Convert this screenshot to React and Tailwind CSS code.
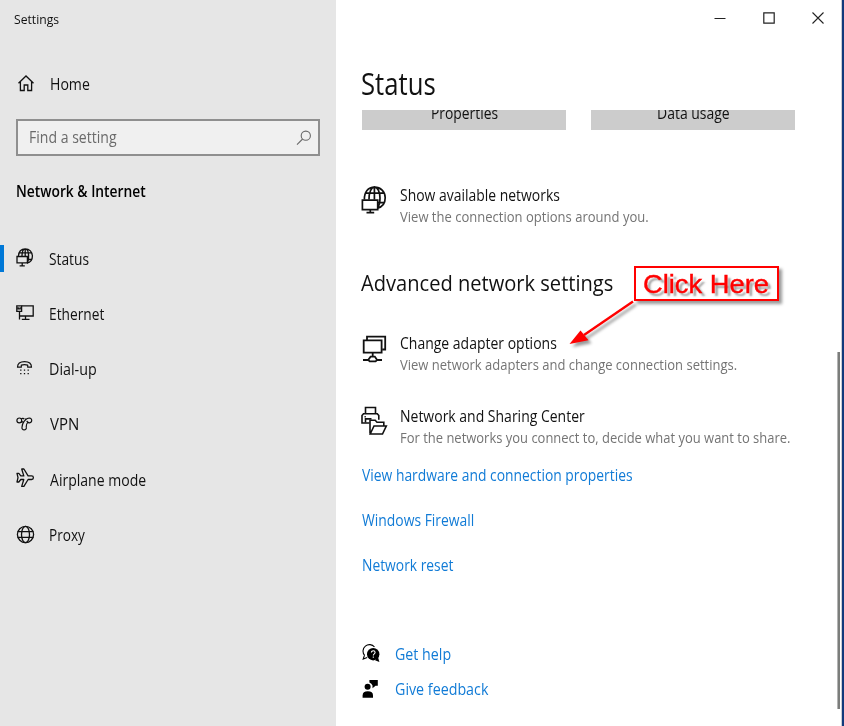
import { useLayoutEffect, useRef, useState } from "react";

// Condenses a line of text horizontally so that it fills the width of its box.
function Line({ children, className = "" }) {
  const box = useRef(null);
  const text = useRef(null);
  const [scale, setScale] = useState(1);
  useLayoutEffect(() => {
    setScale(box.current.clientWidth / text.current.offsetWidth);
  }, [children]);
  return (
    <div ref={box} className={`flex h-5 shrink-0 items-center ${className}`}>
      <span
        ref={text}
        className="inline-block shrink-0 origin-left whitespace-nowrap"
        style={{ transform: `scaleX(${scale})` }}
      >
        {children}
      </span>
    </div>
  );
}

function Svg({ w, h, sw = 1.3, className = "", children }) {
  return (
    <svg
      width={w}
      height={h}
      viewBox={`0 0 ${w} ${h}`}
      fill="none"
      stroke="currentColor"
      strokeWidth={sw}
      className={`shrink-0 ${className}`}
    >
      {children}
    </svg>
  );
}

const HomeIcon = () => (
  <Svg w={18} h={18} className="ml-[17px]">
    <path d="M1.5 8.3 9 1l7.500 7.300M3.400 6.900V15.500h3.800V10h3.600v5.500h3.800V6.900" />
  </Svg>
);

const StatusIcon = () => (
  <Svg w={18} h={20} className="ml-4 -mt-[3px]">
    <path d="M2.500 9.200C2.500 4.600 5.200 1.800 9.200 1.800c4.200 0 7.200 3 7.200 7.300 0 3.700-2.200 6.500-5.400 7.100M6 9.200c0-4.400 1.300-7.400 3.200-7.400 2 0 3.400 3.100 3.400 7.400 0 3.300-.6 5.600-1.600 6.600M3.500 5.900h12M11.500 12.500h4M9.200 1.800v7.400" />
    <path d="M1 9.500h10.400v6.300H1zM6.200 16v2.500M3.600 18.800h5.200" />
  </Svg>
);

const EthernetIcon = () => (
  <Svg w={19} h={17} className="ml-4 -mt-[2px]">
    <path d="M5.500 1.800h11.700V12H3.500V7M9.500 12v3M5.800 15.300h7.700M3.500 7.500v8" />
    <path d="M.8 1.800h4.800v5.500H.8zM2.200 3.200v1.600h2V3.200" />
  </Svg>
);

const DialIcon = () => (
  <Svg w={17} h={17} className="ml-4 -mt-[2px]" sw={1.2}>
    <path
      d="M1.500 7.200c0-3.500 2.500-5.600 7-5.600s7 2.100 7 5.600h-3.800V5.100c-1.800-.6-4.600-.6-6.400 0v2.100Z"
      strokeLinejoin="round"
    />
    <path
      d="M4.800 9.500v1.300M8.500 9.500v1.300M12.200 9.500v1.300M4.800 13v1.300M8.500 13v1.300M12.200 13v1.300"
      strokeWidth="1.3"
    />
  </Svg>
);

const VpnIcon = () => (
  <Svg w={18} h={15} className="ml-4 -mt-px" sw={1.2}>
    <circle cx="3.300" cy="4.400" r="2.400" />
    <path d="M5.300 2.900c.9-.9 2.300-.6 2.900.3M5.300 5.900c.7.500 1.400.1 1.900-.6M9 2.600l.9 1" />
    <path d="M10.300 11.300a2.200 2.200 0 1 1-4.300 0C6 7.500 9.500 2 13.500 2a2.400 2.400 0 1 1-.4 4.800c-1.200-.2-1.700-1.100-2.400-1.900M10.300 11.300c0-1.700-.6-2.200 1.300-4.800" />
  </Svg>
);

const PlaneIcon = () => (
  <Svg w={19} h={20} className="ml-4 -mt-[3px]">
    <path
      d="M1 5.400h1.800l2 2.500h3L5.700 1h2.200l4.200 6.900h3.500c1 0 1.800.8 1.800 1.800s-.8 1.800-1.800 1.800h-3.500L7.900 18.400H5.700l2.100-6.900h-3l-2 2.500H1l1-4.300Z"
      strokeLinejoin="round"
    />
  </Svg>
);

const GlobeIcon = () => (
  <Svg w={19} h={19} className="ml-[15.5px] -mt-px">
    <circle cx="9.500" cy="9.500" r="8.100" />
    <ellipse cx="9.500" cy="9.500" rx="4" ry="8.100" />
    <path d="M1.600 6.600h15.800M1.600 12.400h15.800" />
  </Svg>
);

const NetworksIcon = () => (
  <Svg w={26} h={30} sw={1.7}>
    <path d="M3.400 14.500C3.200 7 7 2.200 13.600 2.200c6 0 10.600 4.400 10.600 10.500 0 5.200-3 9.300-7.800 10.400M8 14.500c-.1-7 2.200-12.300 5.400-12.300 3.400 0 5.600 4.700 5.600 11 0 4-.8 7-2.200 9M4.600 8.200h18M17 17.600h6.500M13.400 2.200v12.300" />
    <path d="M1.400 15.100h15.300v9.500H1.400zM9.300 24.600v3M5.500 27.600h7.700" />
  </Svg>
);

const AdapterIcon = () => (
  <Svg w={26} h={30} sw={1.8}>
    <path d="M6 7V3.600h18.200v12.900h-3" />
    <path d="M2.700 7.400h17.900v12.200H2.700zM11.700 19.600v3.600M2 27h5.400M15.800 27h5.200" />
    <path d="M9.600 23.600h4.200l2.300 3.300-1.500 1.500H8.700L7.200 26.900Z" />
  </Svg>
);

const SharingIcon = () => (
  <Svg w={27} h={30} sw={1.6}>
    <path d="M4.500 7.800V1.500h10v6.300M8.500 17H1V9.500l1.500-1.700h13.800l1.500 1.700v4.300" />
    <path d="M4.500 16.500v-3.600h6M3.500 10.700h1.300" />
    <path d="M9 27.500V14.300h5.200l1.800 2h6.800v3M9.200 28l3.800-8h12.300L21.500 28Z" />
  </Svg>
);

const HelpIcon = () => (
  <Svg w={19} h={20} className="ml-px" sw={1.1}>
    <path d="M2.500 11.200A5.700 5.700 0 1 1 12.500 3M2.500 11.200l-1.300 3.900 4-1.600" />
    <circle cx="11.200" cy="10.200" r="6.200" fill="currentColor" stroke="none" />
    <path d="m13 16.200 4.400 1.800-1.400-5Z" fill="currentColor" stroke="none" />
    <path d="M9.400 8.600c0-2.500 3.700-2.300 3.700 0 0 1.300-1.800 1.300-1.800 2.900M11.300 12.500v1.300" stroke="#fff" />
  </Svg>
);

const FeedbackIcon = () => (
  <Svg w={19} h={20} className="ml-px">
    <g fill="currentColor" stroke="none">
      <circle cx="5.600" cy="7.800" r="3" />
      <path d="M.6 18.800v-2.400c0-2.800 1.800-4.200 5.200-4.200s5.200 1.400 5.200 4.200v2.400Z" />
      <path d="M7.400 1h8.400v5.800h-2.300L10.500 9.300V6.500Q9.700 4.500 7.400 3.500Z" />
    </g>
  </Svg>
);

function NavRow({ icon, label, width, selected }) {
  return (
    <li className="flex h-[55.25px] items-center">
      <div className={`h-[27px] w-1 shrink-0 ${selected ? "bg-[#0078d7]" : ""}`} />
      <div className="-ml-1 flex w-[49px] shrink-0 items-center">{icon}</div>
      <Line className={width}>{label}</Line>
    </li>
  );
}

function Entry({ icon, title, titleW, text, textW }) {
  return (
    <div className="flex h-[44px] items-start">
      <div className="w-[39px] shrink-0">{icon}</div>
      <div className="flex flex-col gap-[2px]">
        <Line className={titleW}>{title}</Line>
        <Line className={`text-[14.5px] text-[#747474] ${textW}`}>{text}</Line>
      </div>
    </div>
  );
}

function Sidebar() {
  return (
    <aside className="flex w-[336px] shrink-0 flex-col bg-[#e6e6e6]">
      <div className="mt-[9px] ml-[14px] text-[13.5px]">
        <Line className="w-[45px]">Settings</Line>
      </div>
      <div className="mt-[45px] flex h-5 items-center">
        <div className="w-[50px]">
          <HomeIcon />
        </div>
        <Line className="w-[40px]">Home</Line>
      </div>
      <div className="mt-[25px] ml-4 flex h-[37px] w-[304px] items-center justify-between border-2 border-[#8f8f8f] bg-[#f0f0f0] pr-[6px] pl-[11px] text-[#6a6a6a]">
        <Line className="-mt-px w-[88px]">Find a setting</Line>
        <Svg w={16} h={16} sw={1.1}>
          <circle cx="9.800" cy="5.700" r="4.600" />
          <path d="M6.600 9 1 14.700" />
        </Svg>
      </div>
      <div className="mt-[25px] ml-4 font-semibold text-black">
        <Line className="w-[130px]">Network &amp; Internet</Line>
      </div>
      <ul className="mt-[30px] flex flex-col">
        <NavRow selected icon={<StatusIcon />} label="Status" width="w-[40px]" />
        <NavRow icon={<EthernetIcon />} label="Ethernet" width="w-[55px]" />
        <NavRow icon={<DialIcon />} label="Dial-up" width="w-[48px]" />
        <NavRow icon={<VpnIcon />} label="VPN" width="ml-px w-[29px]" />
        <NavRow icon={<PlaneIcon />} label="Airplane mode" width="ml-px w-[96px]" />
        <NavRow icon={<GlobeIcon />} label="Proxy" width="w-[36px]" />
      </ul>
    </aside>
  );
}

function Main() {
  return (
    <main className="flex min-w-0 flex-1 flex-col pl-[25px]">
      <div className="flex h-9 items-center justify-end gap-[37px] pr-[17px] text-[#222]">
        <Svg w={12} h={12} sw={1}>
          <path d="M.5 6.500h11" />
        </Svg>
        <Svg w={12} h={12} sw={1.2}>
          <path d="M.8.8h10.400v10.400H.8z" />
        </Svg>
        <Svg w={12} h={12} sw={1.1}>
          <path d="m.5.5 11 11m0-11-11 11" />
        </Svg>
      </div>
      <h1 className="mt-[36px] text-[30.5px]">
        <Line className="mt-px -mb-px w-[75px]">Status</Line>
      </h1>
      <div className="mt-[18px] ml-px flex gap-[25px]">
        <div className="flex h-5 w-[204px] justify-center overflow-hidden bg-[#ccc]">
          <Line className="-mt-[7px] ml-px w-[67px]">Properties</Line>
        </div>
        <div className="flex h-5 w-[204px] justify-center overflow-hidden bg-[#ccc]">
          <Line className="-mt-[7px] w-[73px]">Data usage</Line>
        </div>
      </div>
      <div className="mt-[55px]">
        <Entry
          icon={<NetworksIcon />}
          title="Show available networks"
          titleW="w-[160px]"
          text="View the connection options around you."
          textW="w-[249px]"
        />
      </div>
      <h2 className="mt-[43px] text-[22px]">
        <Line className="w-[252px]">Advanced network settings</Line>
      </h2>
      <div className="mt-[41px] flex flex-col gap-[29px]">
        <Entry
          icon={<AdapterIcon />}
          title="Change adapter options"
          titleW="w-[157px]"
          text="View network adapters and change connection settings."
          textW="w-[337px]"
        />
        <Entry
          icon={<SharingIcon />}
          title="Network and Sharing Center"
          titleW="w-[185px]"
          text="For the networks you connect to, decide what you want to share."
          textW="w-[390px]"
        />
      </div>
      <div className="mt-[15px] ml-px flex flex-col gap-[25px] text-[#117bd6]">
        <Line className="w-[271px]">View hardware and connection properties</Line>
        <Line className="w-[112px]">Windows Firewall</Line>
        <Line className="w-[91px]">Network reset</Line>
      </div>
      <div className="mt-[69px] flex flex-col gap-4 text-[#117bd6]">
        <div className="flex h-5 items-center">
          <div className="w-[34px] text-black">
            <HelpIcon />
          </div>
          <Line className="w-[56px]">Get help</Line>
        </div>
        <div className="-mt-px flex h-5 items-center">
          <div className="w-[34px] text-black">
            <FeedbackIcon />
          </div>
          <Line className="w-[93px]">Give feedback</Line>
        </div>
      </div>
    </main>
  );
}

// Callout that lies over the settings page.
function Callout() {
  return (
    <>
      <div className="absolute top-[266px] left-[634px] flex h-[35px] w-[145px] items-center border-2 border-[#f00] bg-white pl-[7px] font-['Liberation_Sans',Arial,sans-serif] text-[26px] text-[#f00] shadow-[3px_3px_3px_rgba(0,0,0,0.4)]">
        <Line className="w-[126px] [-webkit-text-stroke:0.4px_#f00] [text-shadow:3px_3px_2px_rgba(60,60,60,0.5)]">Click Here</Line>
      </div>
      <svg
        className="absolute top-[296px] left-[564px] drop-shadow-[3px_3px_1.5px_rgba(0,0,0,0.4)]"
        width="74"
        height="54"
        viewBox="0 0 74 54"
      >
        <path d="M69 5.500 20 39" stroke="#f00" strokeWidth="2.400" />
        <path d="m5.500 48 11-13.500 8 9.800Z" fill="#f00" />
      </svg>
    </>
  );
}

export default function App() {
  return (
    <div className="relative flex h-[726px] w-[844px] overflow-hidden bg-white font-['Open_Sans','Noto_Sans',sans-serif] text-[15.5px] leading-5 text-[#111]">
      <Sidebar />
      <Main />
      <div className="flex w-[3px] shrink-0 border-l border-[#c8ccd4] bg-[#113a7c]" />
      <div className="absolute top-[352px] left-[837px] h-[357px] w-[3px] border-l border-[#b4b4b4] bg-[#7b7d7b]" />
      <Callout />
    </div>
  );
}
